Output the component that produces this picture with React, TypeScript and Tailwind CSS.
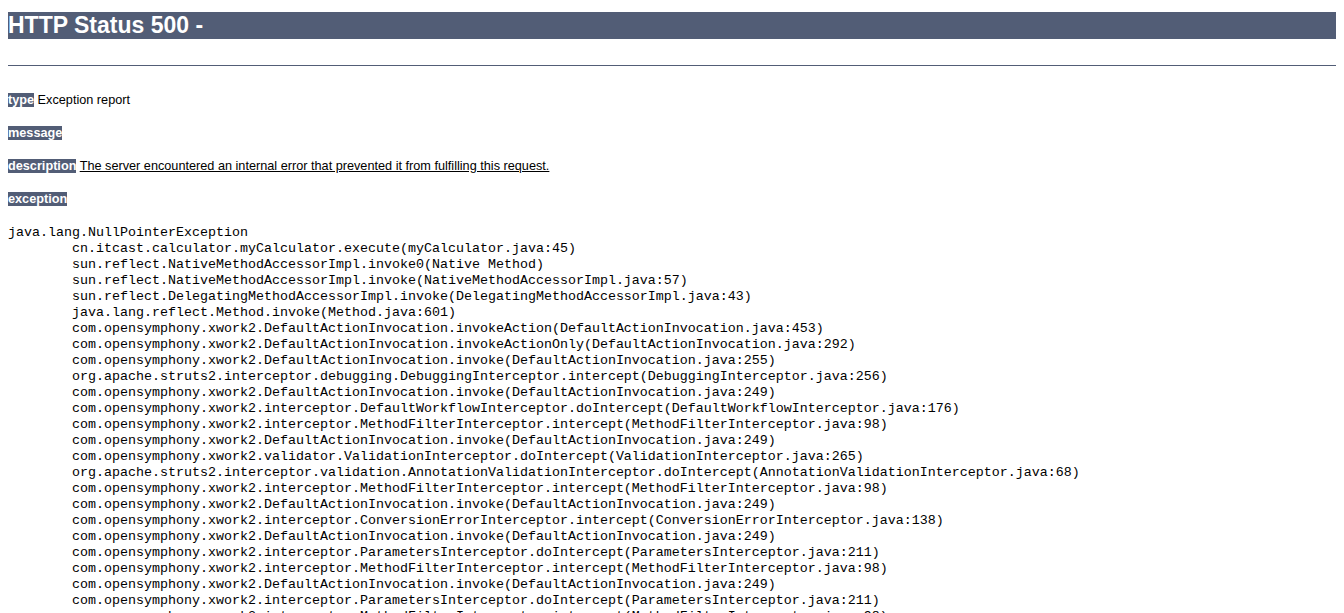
const trace = [
  "cn.itcast.calculator.myCalculator.execute(myCalculator.java:45)",
  "sun.reflect.NativeMethodAccessorImpl.invoke0(Native Method)",
  "sun.reflect.NativeMethodAccessorImpl.invoke(NativeMethodAccessorImpl.java:57)",
  "sun.reflect.DelegatingMethodAccessorImpl.invoke(DelegatingMethodAccessorImpl.java:43)",
  "java.lang.reflect.Method.invoke(Method.java:601)",
  "com.opensymphony.xwork2.DefaultActionInvocation.invokeAction(DefaultActionInvocation.java:453)",
  "com.opensymphony.xwork2.DefaultActionInvocation.invokeActionOnly(DefaultActionInvocation.java:292)",
  "com.opensymphony.xwork2.DefaultActionInvocation.invoke(DefaultActionInvocation.java:255)",
  "org.apache.struts2.interceptor.debugging.DebuggingInterceptor.intercept(DebuggingInterceptor.java:256)",
  "com.opensymphony.xwork2.DefaultActionInvocation.invoke(DefaultActionInvocation.java:249)",
  "com.opensymphony.xwork2.interceptor.DefaultWorkflowInterceptor.doIntercept(DefaultWorkflowInterceptor.java:176)",
  "com.opensymphony.xwork2.interceptor.MethodFilterInterceptor.intercept(MethodFilterInterceptor.java:98)",
  "com.opensymphony.xwork2.DefaultActionInvocation.invoke(DefaultActionInvocation.java:249)",
  "com.opensymphony.xwork2.validator.ValidationInterceptor.doIntercept(ValidationInterceptor.java:265)",
  "org.apache.struts2.interceptor.validation.AnnotationValidationInterceptor.doIntercept(AnnotationValidationInterceptor.java:68)",
  "com.opensymphony.xwork2.interceptor.MethodFilterInterceptor.intercept(MethodFilterInterceptor.java:98)",
  "com.opensymphony.xwork2.DefaultActionInvocation.invoke(DefaultActionInvocation.java:249)",
  "com.opensymphony.xwork2.interceptor.ConversionErrorInterceptor.intercept(ConversionErrorInterceptor.java:138)",
  "com.opensymphony.xwork2.DefaultActionInvocation.invoke(DefaultActionInvocation.java:249)",
  "com.opensymphony.xwork2.interceptor.ParametersInterceptor.doIntercept(ParametersInterceptor.java:211)",
  "com.opensymphony.xwork2.interceptor.MethodFilterInterceptor.intercept(MethodFilterInterceptor.java:98)",
  "com.opensymphony.xwork2.DefaultActionInvocation.invoke(DefaultActionInvocation.java:249)",
  "com.opensymphony.xwork2.interceptor.ParametersInterceptor.doIntercept(ParametersInterceptor.java:211)",
  "com.opensymphony.xwork2.interceptor.MethodFilterInterceptor.intercept(MethodFilterInterceptor.java:98)",
];

function Label({ children }: { children: string }) {
  return <b className="bg-[#525D76] text-white font-bold">{children}</b>;
}

export default function App() {
  return (
    <div className="h-[613px] overflow-hidden bg-white px-2 pt-3 font-['Liberation_Sans',Arial,sans-serif] text-black">
      <h1 className="h-[27px] bg-[#525D76] text-[23px] font-bold leading-[27px] text-white">HTTP Status 500 - </h1>
      <hr className="mt-[26px] border-0 border-t border-[#525D76]" />

      {/* report fields */}
      <div className="mt-[27px] flex flex-col gap-[18px] text-[12.7px] leading-[15px]">
        <p>
          <Label>type</Label> Exception report
        </p>
        <p>
          <Label>message</Label>
        </p>
        <p>
          <Label>description</Label> <u>The server encountered an internal error that prevented it from fulfilling this request.</u>
        </p>
        <p>
          <Label>exception</Label>
        </p>
      </div>

      <pre className="mt-[18px] font-['Liberation_Mono','Courier_New',monospace] text-[13.33px] leading-[16px] whitespace-pre [tab-size:8]">
        {"java.lang.NullPointerException\n"}
        {trace.map((line) => "\t" + line).join("\n")}
      </pre>
    </div>
  );
}
